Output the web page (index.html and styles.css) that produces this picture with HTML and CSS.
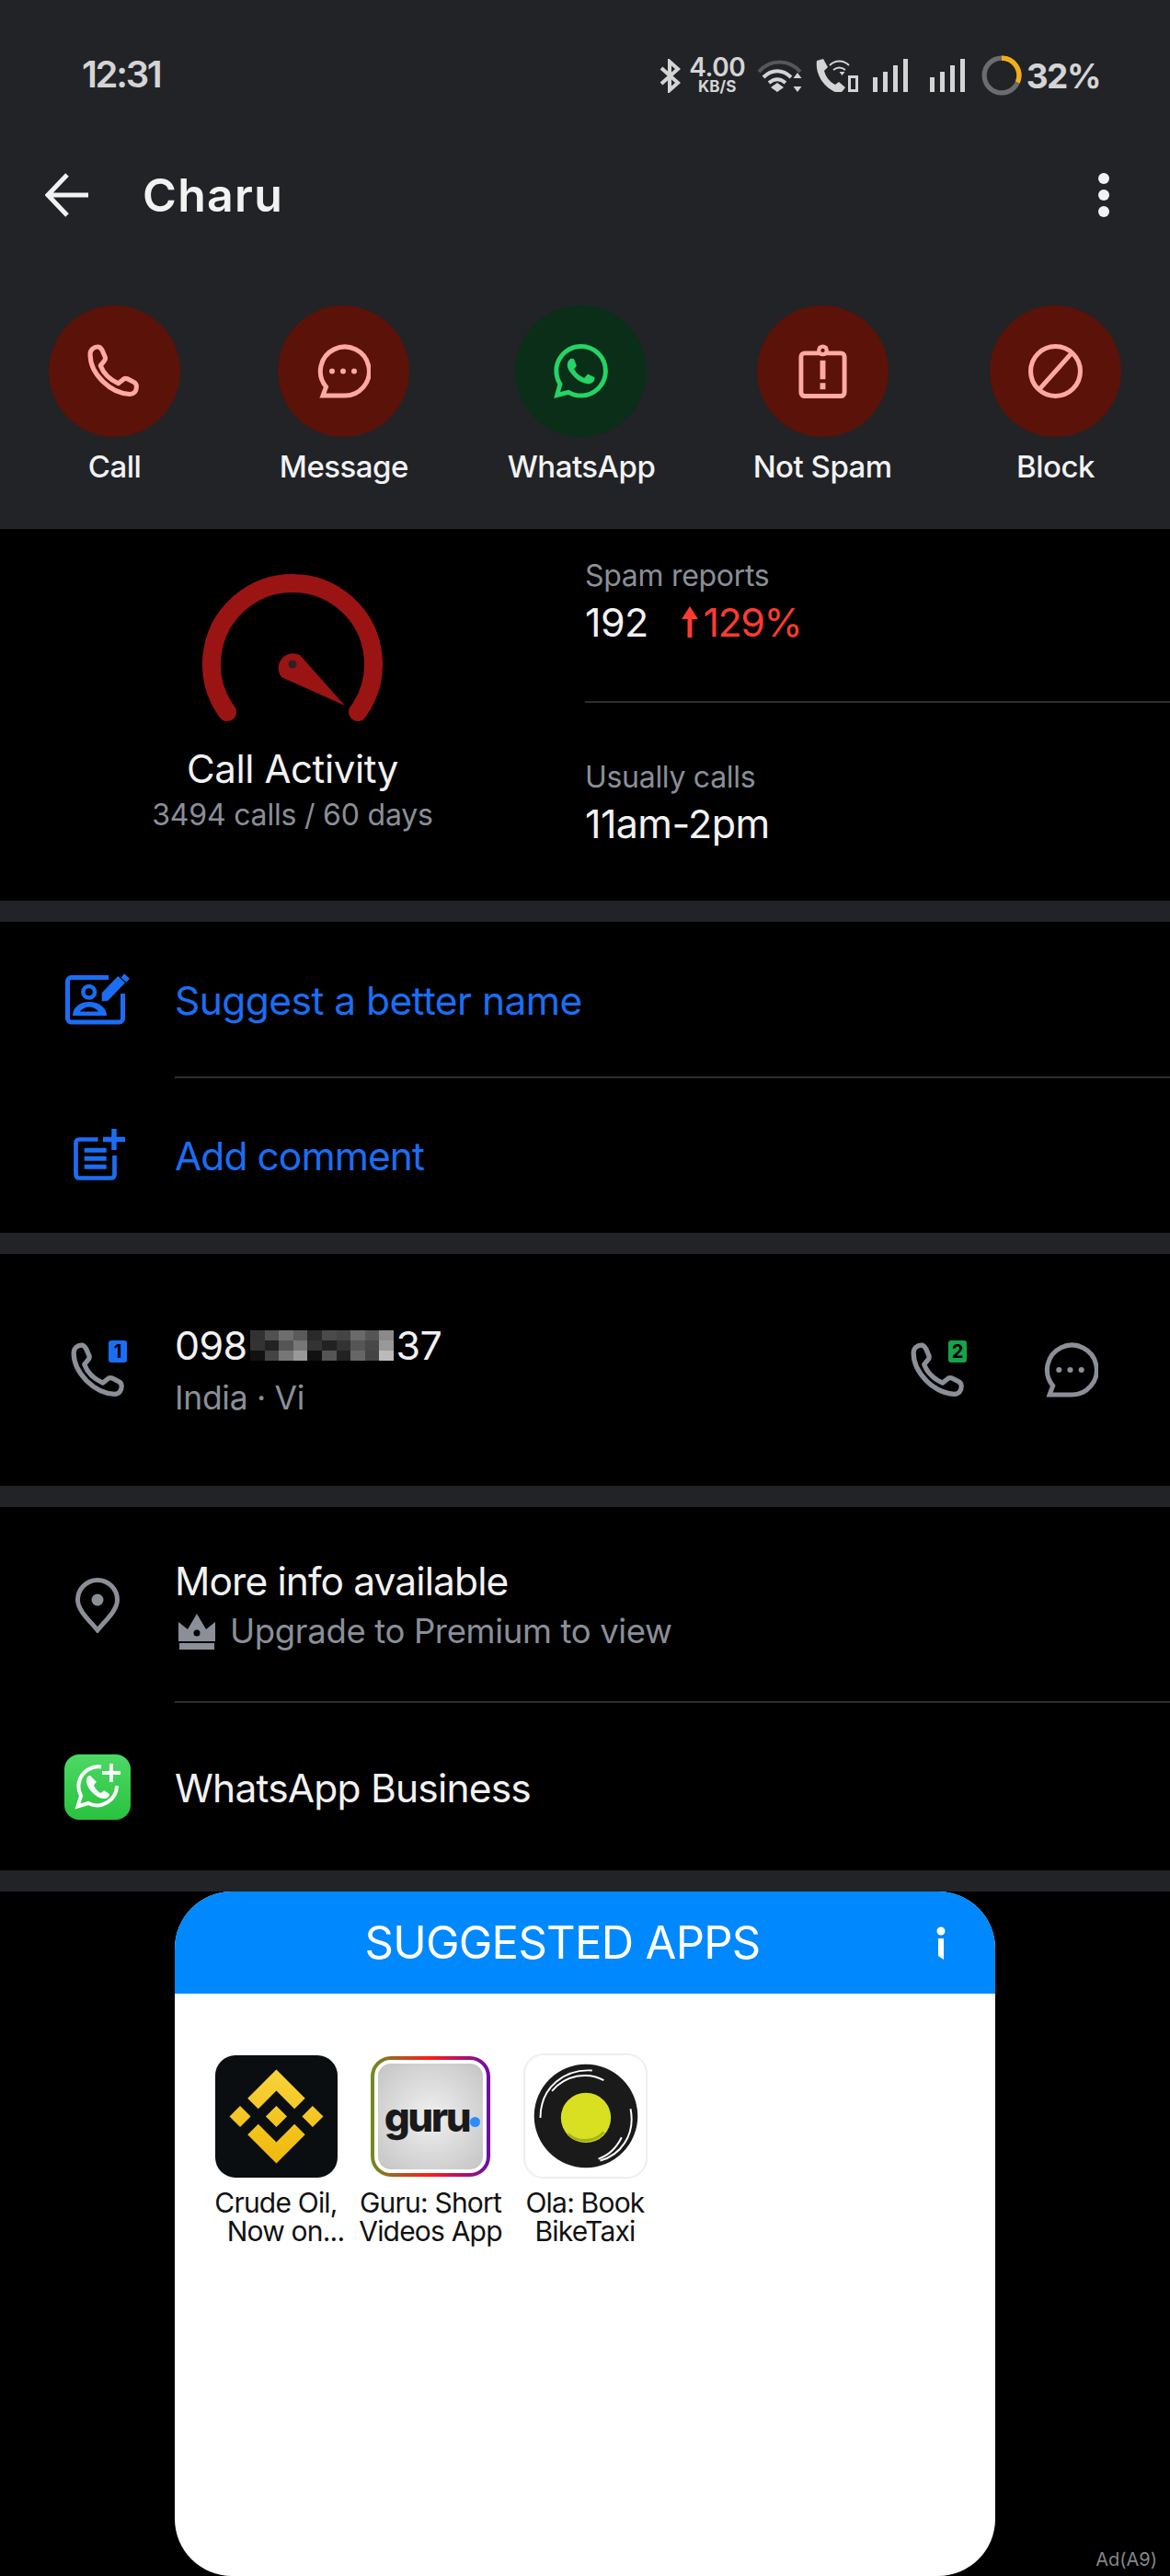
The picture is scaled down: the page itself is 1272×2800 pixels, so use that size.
FILE: index.html
```html
<!DOCTYPE html>
<html lang="en">
<head>
<meta charset="utf-8">
<title>Charu</title>
<link rel="stylesheet" href="styles.css">
</head>
<body>
<svg class="defs" width="0" height="0" aria-hidden="true">
  <defs>
    <symbol id="phone" viewBox="0 0 58 58"><path fill="none" stroke="currentColor" stroke-width="5" stroke-linejoin="round" d="M3 11C3 6 7 3 11 3c2 0 4 2 5 4l3 7c.5 2 0 3-1 4l-4 5c3 8 10 15 19 19l5-4c1-1 3-1.5 4.5-1l7 3.5c2 1 3 3 3 5 0 5-3 8-7 8C25 53 3 32 3 11z"/></symbol>
    <symbol id="chat" viewBox="0 0 59 58"><path fill="none" stroke="currentColor" stroke-width="5" d="M7 55.5 10.5 46A26.5 26.5 0 1 1 29.5 55.5Z"/><circle cx="17" cy="29" r="3" fill="currentColor"/><circle cx="29" cy="29" r="3" fill="currentColor"/><circle cx="41" cy="29" r="3" fill="currentColor"/></symbol>
  </defs>
</svg>

<header class="head">
  <div class="status">
    <span class="time">12:31</span>
    <div class="status-icons">
      <svg class="st-bt" viewBox="0 0 23 37"><path fill="none" stroke="#d4d4d4" stroke-width="4" d="M2 10 20 26 11 34V3l9 8L2 27"/></svg>
      <div class="speed"><span class="speed-n">4.00</span><span class="speed-u">KB/S</span></div>
      <svg class="st-wifi" viewBox="0 0 49 36"><path fill="none" stroke="#55575a" stroke-width="4" d="M2 14C14 0 35 0 47 14"/><path fill="none" stroke="#d4d4d4" stroke-width="4" d="M7 20c9-9 21-9 30 0M13 26c6-5 12-5 18 0"/><path fill="#d4d4d4" d="M22 26l7 5-7 5-7-5zM44 15l4.500 6h-9zM44 36l-4.500-6h9z"/></svg>
      <svg class="st-call" viewBox="0 0 47 36"><path fill="#d4d4d4" d="M2 2l7-2 5 9-4 4c2 7 6 12 12 15l4-3 7 6-3 4c-2 2-5 2-8 1C10 31 0 17 2 2z"/><path fill="none" stroke="#d4d4d4" stroke-width="2" d="M16 7c6-6 15-6 21 0M20 12c4-3 9-3 13 0"/><path fill="#d4d4d4" d="M26.500 14h6l-3 4zM36 18h11v18H36z"/><path fill="#212327" d="M39 21h5v12h-5z"/></svg>
      <svg class="st-sig" viewBox="0 0 38 36"><path fill="#d4d4d4" d="M0 20h5v16H0zM11 14h5v22h-5zM22 7h5v29h-5zM33 0h5v36h-5z"/></svg>
      <svg class="st-sig" viewBox="0 0 38 36"><path fill="#d4d4d4" d="M0 20h5v16H0zM11 14h5v22h-5zM22 7h5v29h-5zM33 0h5v36h-5z"/></svg>
      <svg class="st-batt" viewBox="0 0 42 42"><circle cx="21" cy="21" r="18" fill="none" stroke="#6b6c6e" stroke-width="5"/><path fill="none" stroke="#f5ae14" stroke-width="5" d="M21 3A18 18 0 0 1 37.500 28.200"/></svg>
      <span class="pct">32%</span>
    </div>
  </div>

  <div class="toolbar">
    <svg class="back" viewBox="0 0 48 48"><path fill="none" stroke="#f2f2f2" stroke-width="5" d="M47 24H4M24 2 3 24l21 22"/></svg>
    <h1 class="title">Charu</h1>
    <svg class="more" viewBox="0 0 12 48"><circle cx="6" cy="6" r="6" fill="#f2f2f2"/><circle cx="6" cy="24" r="6" fill="#f2f2f2"/><circle cx="6" cy="42" r="6" fill="#f2f2f2"/></svg>
  </div>

  <div class="actions">
    <div class="action">
      <div class="circle red"><svg class="a-ic"><use href="#phone"/></svg></div>
      <span class="a-label">Call</span>
    </div>
    <div class="action">
      <div class="circle red"><svg class="a-ic"><use href="#chat"/></svg></div>
      <span class="a-label">Message</span>
    </div>
    <div class="action">
      <div class="circle green"><svg class="a-ic" viewBox="0 0 24 24"><path fill="#25d366" d="M17.472 14.382c-.297-.149-1.758-.867-2.03-.967-.273-.099-.471-.148-.67.15-.197.297-.767.966-.94 1.164-.173.199-.347.223-.644.075-.297-.15-1.255-.463-2.39-1.475-.883-.788-1.48-1.761-1.653-2.059-.173-.297-.018-.458.13-.606.134-.133.298-.347.446-.52.149-.174.198-.298.298-.497.099-.198.05-.371-.025-.52-.075-.149-.669-1.612-.916-2.207-.242-.579-.487-.5-.669-.51-.173-.008-.371-.01-.57-.01-.198 0-.52.074-.792.372-.272.297-1.04 1.016-1.04 2.479 0 1.462 1.065 2.875 1.213 3.074.149.198 2.096 3.2 5.077 4.487.709.306 1.262.489 1.694.625.712.227 1.36.195 1.871.118.571-.085 1.758-.719 2.006-1.413.248-.694.248-1.289.173-1.413-.074-.124-.272-.198-.57-.347m-5.421 7.403h-.004a9.87 9.87 0 01-5.031-1.378l-.361-.214-3.741.982.998-3.648-.235-.374a9.86 9.86 0 01-1.51-5.26c.001-5.45 4.436-9.884 9.888-9.884 2.64 0 5.122 1.03 6.988 2.898a9.825 9.825 0 012.893 6.994c-.003 5.45-4.437 9.884-9.885 9.884m8.413-18.297A11.815 11.815 0 0012.05 0C5.495 0 .16 5.335.157 11.892c0 2.096.547 4.142 1.588 5.945L.057 24l6.305-1.654a11.882 11.882 0 005.683 1.448h.005c6.554 0 11.89-5.335 11.893-11.893a11.821 11.821 0 00-3.48-8.413z"/></svg></div>
      <span class="a-label">WhatsApp</span>
    </div>
    <div class="action">
      <div class="circle red"><svg class="a-ic" viewBox="0 0 53 60"><rect x="2.500" y="10" width="48" height="47.500" rx="4" fill="none" stroke="currentColor" stroke-width="5"/><circle cx="26.500" cy="7" r="6.500" fill="currentColor"/><circle cx="26.500" cy="7" r="2.200" fill="#5a1209"/><path fill="currentColor" d="M23.500 18h6v21h-6zM23.500 43h6v7h-6z"/></svg></div>
      <span class="a-label">Not Spam</span>
    </div>
    <div class="action">
      <div class="circle red"><svg class="a-ic" viewBox="0 0 58 58"><circle cx="29" cy="29" r="26.500" fill="none" stroke="currentColor" stroke-width="5"/><path fill="none" stroke="currentColor" stroke-width="5" d="M46 10 12 48"/></svg></div>
      <span class="a-label">Block</span>
    </div>
  </div>
</header>

<section class="stats">
  <div class="activity">
    <svg class="gauge" viewBox="0 0 200 165"><path fill="none" stroke="#9b1414" stroke-width="20" stroke-linecap="round" d="M29 150A88 88 0 1 1 171 150"/><path fill="#9b1414" d="M157 143 88 112a16 16 0 0 1 20-24z"/><circle cx="100" cy="98" r="4.500" fill="#2a2224"/></svg>
    <div class="act-title">Call Activity</div>
    <div class="act-sub">3494 calls / 60 days</div>
  </div>
  <div class="facts">
    <div class="fact fact-a">
      <div class="f-label">Spam reports</div>
      <div class="f-value"><span>192</span><span class="f-trend"><svg class="f-arrow" viewBox="0 0 18 34"><path fill="#ff3b30" d="M9 0l9 14h-6.500v20h-5V14H0z"/></svg>129%</span></div>
    </div>
    <div class="fact fact-b">
      <div class="f-label">Usually calls</div>
      <div class="f-value">11am-2pm</div>
    </div>
  </div>
</section>

<section class="block">
  <div class="row row-suggest">
    <svg class="ic" viewBox="0 0 72 60"><path fill="none" stroke="#1b6ef3" stroke-width="5" d="M48 5.500H7.500a4 4 0 0 0-4 4V50a4 4 0 0 0 4 4h52a4 4 0 0 0 4-4V23"/><circle cx="26.700" cy="21.300" r="6.300" fill="none" stroke="#1b6ef3" stroke-width="4.500"/><path fill="#1b6ef3" fill-rule="evenodd" d="M9 47c0-9 8-15 18-15s19 6 19 15zM17 42.500h20c-2-3-6-5-10-5s-8 2-10 5z"/><path fill="#1b6ef3" d="M40.700 31.300v-9L58.300 4 66 11.300 47.300 30.700zM65 1.300l6 5.400-3.700 4-5.600-5z"/></svg>
    <span class="link">Suggest a better name</span>
  </div>
  <div class="row row-add">
    <svg class="ic" viewBox="0 0 72 60"><path fill="none" stroke="#1b6ef3" stroke-width="4.700" d="M36.500 12.500H16A3.500 3.500 0 0 0 12.500 16v35a3.500 3.500 0 0 0 3.500 3.500h35a3.500 3.500 0 0 0 3.500-3.500V30"/><path fill="none" stroke="#1b6ef3" stroke-width="5.500" d="M42 12.500h24M54 1v23"/><path fill="none" stroke="#1b6ef3" stroke-width="5" d="M21.700 24.300h24M21.700 33.300h24M21.700 42.300h24"/></svg>
    <span class="link">Add comment</span>
  </div>
</section>

<section class="block number">
  <div class="icon-badge">
    <svg class="ic-phone"><use href="#phone"/></svg>
    <span class="badge b-blue">1</span>
  </div>
  <div class="num-text">
    <div class="num">098<svg class="blur" viewBox="0 0 10 3" preserveAspectRatio="none" shape-rendering="crispEdges"><path fill="#323232" d="M0 0h1v1H0z"/><path fill="#505050" d="M1 0h1v1H1z"/><path fill="#6e6e6e" d="M2 0h1v1H2z"/><path fill="#5a5a5a" d="M3 0h1v1H3z"/><path fill="#2a2a2a" d="M4 0h1v1H4z"/><path fill="#4a4a4a" d="M5 0h1v1H5z"/><path fill="#444" d="M6 0h1v1H6z"/><path fill="#6a6a6a" d="M7 0h1v1H7z"/><path fill="#555" d="M8 0h1v1H8z"/><path fill="#8a8a8a" d="M9 0h1v1H9z"/><path fill="#333" d="M0 1h1v1H0z"/><path fill="#222" d="M1 1h1v1H1z"/><path fill="#555" d="M2 1h1v1H2z"/><path fill="#777" d="M3 1h1v1H3z"/><path fill="#333" d="M4 1h1v1H4z"/><path fill="#222" d="M5 1h1v1H5z"/><path fill="#333" d="M6 1h1v1H6z"/><path fill="#555" d="M7 1h1v1H7z"/><path fill="#484848" d="M8 1h1v1H8z"/><path fill="#999" d="M9 1h1v1H9z"/><path fill="#111" d="M0 2h1v1H0z"/><path fill="#444" d="M1 2h1v1H1z"/><path fill="#777" d="M2 2h1v1H2z"/><path fill="#999" d="M3 2h1v1H3z"/><path fill="#111" d="M4 2h1v1H4z"/><path fill="#555" d="M5 2h1v1H5z"/><path fill="#222" d="M6 2h1v1H6z"/><path fill="#666" d="M7 2h1v1H7z"/><path fill="#444" d="M8 2h1v1H8z"/><path fill="#bbb" d="M9 2h1v1H9z"/></svg>37</div>
    <div class="num-sub">India · Vi</div>
  </div>
  <div class="num-actions">
    <div class="icon-badge">
      <svg class="ic-phone"><use href="#phone"/></svg>
      <span class="badge b-green">2</span>
    </div>
    <svg class="ic-chat"><use href="#chat"/></svg>
  </div>
</section>

<section class="block">
  <div class="row row-info">
    <svg class="ic" viewBox="0 0 72 60"><path fill="none" stroke="#8a8f98" stroke-width="5" d="M36 57C26 45 14.500 35 14.500 24a21.500 21.500 0 0 1 43 0C57.500 35 46 45 36 57z"/><circle cx="36" cy="24" r="6.500" fill="#8a8f98"/></svg>
    <div>
      <div class="info-title">More info available</div>
      <div class="info-sub"><svg class="crown" viewBox="0 0 40 39"><path fill="#8a8f98" d="M0 9l10 8L20 0l10 17 10-8v21H0zM1 32h38v7H1z"/><circle cx="20" cy="21" r="3.500" fill="#000"/></svg>Upgrade to Premium to view</div>
    </div>
  </div>
  <div class="row row-wa">
    <div class="ic wa-tile"><svg class="wa-glyph" viewBox="0 0 50 50"><path fill="none" stroke="#fff" stroke-width="4" d="M29 3.500A21.500 21.500 0 0 0 7 35L3.500 46.500 15 43a21.500 21.500 0 0 0 31-19"/><path fill="#fff" d="M38 0h4v8h8v4h-8v8h-4v-8h-8V8h8z"/><path fill="#fff" d="M17 13c-2 0-4 2-4 6 0 8 11 19 19 19 4 0 6-2 6-5l-6-4-3 3c-3-1-7-5-8-9l3-3z"/></svg></div>
    <span class="wa-text">WhatsApp Business</span>
  </div>
</section>

<section class="ad-area">
  <div class="ad-card">
    <div class="ad-head">
      <span class="ad-title">SUGGESTED APPS</span>
      <svg class="ad-i" viewBox="0 0 10 36"><circle cx="5" cy="5" r="4.500" fill="#fff"/><path fill="#fff" d="M2 13h6v23L2 32z"/></svg>
    </div>
    <div class="apps">
      <div class="app">
        <div class="app-ic app-binance"><svg class="bn" viewBox="-3.650 -3.650 31.300 31.300"><defs><linearGradient id="bg" x1="0" y1="0" x2="0" y2="1"><stop offset="0" stop-color="#f8d33a"/><stop offset="1" stop-color="#f0b90b"/></linearGradient></defs><path fill="url(#bg)" d="M16.624 13.9202l2.7175 2.7154-7.353 7.353-7.353-7.352 2.7175-2.7164 4.6355 4.6595 4.6356-4.6595zm4.6366-4.6366L24 12l-2.7154 2.7164L18.5682 12l2.6924-2.7164zm-9.272.001l2.7163 2.6914-2.7164 2.7174v-.001L9.2721 12l2.7164-2.7154zm-9.2722-.001L5.4088 12l-2.6914 2.6924L0 12l2.7164-2.7164zM11.9885.0115l7.353 7.329-2.7174 2.7154-4.6356-4.6356-4.6355 4.6595-2.7174-2.7154 7.353-7.353z"/></svg></div>
        <div class="app-name">Crude Oil,<br><span class="indent">Now on...</span></div>
      </div>
      <div class="app">
        <div class="app-ic app-guru"><div class="guru-in"><span class="guru-t">guru</span><span class="guru-dot"></span></div></div>
        <div class="app-name">Guru: Short<br>Videos App</div>
      </div>
      <div class="app">
        <div class="app-ic app-ola"><svg class="ola" viewBox="0 0 135 136"><circle cx="68" cy="68" r="58" fill="#1a1a1a"/><path fill="none" stroke="#fff" stroke-width="2" d="M17 70C17 35 45 15 75 17M30 40C45 22 70 18 88 28M118 60c6 30-12 52-34 58M108 92c-6 12-14 20-26 24"/><circle cx="68" cy="70" r="28" fill="#d8e021"/><path fill="none" stroke="#a7b01a" stroke-width="3" d="M48 88c10 10 30 10 40-2"/></svg></div>
        <div class="app-name">Ola: Book<br>BikeTaxi</div>
      </div>
    </div>
  </div>
  <span class="ad-tag">Ad(A9)</span>
</section>
</body>
</html>
```
FILE: styles.css
```css
* { box-sizing: border-box; }
html, body { margin: 0; padding: 0; }
body {
  width: 1272px;
  height: 2800px;
  overflow: hidden;
  background: #000;
  color: #f2f2f2;
  font-family: Inter, "Liberation Sans", sans-serif;
}
.defs { position: absolute; }

/* header */
.head { height: 575px; background: #212327; padding-top: 60px; }
.status {
  height: 44px;
  display: flex;
  align-items: center;
  justify-content: space-between;
  padding: 0 76px 0 89px;
}
.time { font-size: 40px; font-weight: 600; color: #d4d4d4; letter-spacing: -2.300px; margin-top: -3px; }
.status-icons { display: flex; align-items: center; }
.st-bt { width: 23px; height: 37px; }
.speed { display: flex; flex-direction: column; align-items: center; margin-left: 10px; width: 60px; color: #d4d4d4; font-weight: 600; }
.speed-n { font-size: 28px; line-height: 21px; letter-spacing: -.5px; }
.speed-u { font-size: 17px; line-height: 16px; margin-top: 2px; font-weight: 700; }
.st-wifi { width: 49px; height: 36px; margin-left: 13px; }
.st-call { width: 47px; height: 36px; margin-left: 14px; }
.st-sig { width: 38px; height: 36px; margin-left: 16px; }
.st-sig + .st-sig { margin-left: 24px; }
.st-batt { width: 44px; height: 44px; margin-left: 18px; }
.pct { font-size: 37px; font-weight: 700; color: #d4d4d4; margin-left: 5px; letter-spacing: -1.5px; }

.toolbar {
  margin-top: 84px;
  height: 48px;
  display: flex;
  align-items: center;
  padding: 0 66px 0 49px;
}
.back { width: 48px; height: 48px; }
.title { margin: 0 0 0 58px; font-size: 50px; font-weight: 600; letter-spacing: 1.300px; color: #f2f2f2; flex: 1; }
.more { width: 12px; height: 48px; }

.actions {
  margin-top: 96px;
  display: flex;
  justify-content: space-between;
  padding: 0 53px;
}
.action { display: flex; flex-direction: column; align-items: center; }
.circle {
  width: 143px;
  height: 143px;
  border-radius: 50%;
  display: flex;
  align-items: center;
  justify-content: center;
  color: #ffa9a2;
}
.red { background: #5a1209; }
.green { background: #0a2e18; }
.a-ic { width: 59px; height: 59px; }
.a-label { margin-top: 14px; font-size: 33px; line-height: 36px; font-weight: 500; color: #f2f2f2; white-space: nowrap; letter-spacing: -.5px; }

/* stats */
.stats {
  height: 427px;
  display: grid;
  grid-template-columns: 636px 636px;
  border-bottom: 23px solid #212327;
}
.activity { display: flex; flex-direction: column; align-items: center; padding-top: 49px; }
.gauge { width: 200px; height: 165px; }
.act-title { margin-top: 24px; font-size: 42px; line-height: 46px; letter-spacing: -.4px; color: #f2f2f2; }
.act-sub { margin-top: 7px; font-size: 32px; line-height: 40px; color: #8a8f98; letter-spacing: -.2px; }
.facts { display: flex; flex-direction: column; }
.fact-a { height: 189px; border-bottom: 2px solid #2d2d2d; padding-top: 29px; }
.fact-b { padding-top: 59px; }
.f-label { font-size: 32px; line-height: 44px; color: #8a8f98; letter-spacing: -.3px; }
.f-value { margin-top: 4px; font-size: 43px; line-height: 48px; color: #f2f2f2; display: flex; letter-spacing: -.6px; white-space: nowrap; }
.f-trend { margin-left: 36px; color: #ff3b30; display: flex; align-items: center; letter-spacing: -1.500px; }
.f-arrow { width: 18px; height: 34px; margin-right: 6px; }

/* lists */
.block { border-bottom: 23px solid #212327; }
.row { display: flex; align-items: center; padding-left: 70px; }
.ic { width: 72px; height: 60px; margin-right: 48px; flex: none; }
.row-suggest { height: 170px; position: relative; }
.row-add { height: 168px; }
.row-suggest::after, .row-info::after {
  content: "";
  position: absolute;
  left: 190px;
  right: 0;
  bottom: 0;
  height: 2px;
  background: #2d2d2d;
}
.link { font-size: 42.500px; letter-spacing: -.55px; color: #1b6ef3; }
.row-add .link { letter-spacing: -.95px; }

.number {
  height: 275px;
  padding: 0 78px 0 77px;
  display: flex;
  align-items: center;
}
.icon-badge { position: relative; width: 61px; height: 61px; color: #8a8f98; flex: none; }
.ic-phone { width: 61px; height: 61px; }
.badge {
  position: absolute;
  right: 0;
  top: -2px;
  width: 20px;
  height: 24px;
  border-radius: 3px;
  font-size: 20px;
  line-height: 24px;
  font-weight: 700;
  text-align: center;
  color: #000;
}
.b-blue { background: #1b6ef3; }
.b-green { background: #16a34a; }
.num-text { margin-left: 52px; flex: 1; padding-top: 4px; }
.num { font-size: 43px; line-height: 58px; display: flex; align-items: center; letter-spacing: -.6px; }
.blur { width: 156px; height: 33px; margin: 0 3px; }
.num-sub { font-size: 35.500px; line-height: 58px; color: #8a8f98; letter-spacing: -.3px; }
.num-actions { display: flex; align-items: center; gap: 83px; }
.ic-chat { width: 60px; height: 60px; color: #8a8f98; }

.row-info { height: 213px; position: relative; }
.info-title { font-size: 42.500px; line-height: 55px; letter-spacing: -.9px; padding-top: 2px; }
.info-sub { font-size: 36.500px; line-height: 55px; color: #8a8f98; display: flex; align-items: center; letter-spacing: -.35px; white-space: nowrap; }
.crown { width: 40px; height: 39px; margin: 0 16px 0 4px; flex: none; }
.row-wa { height: 182px; }
.wa-tile {
  width: 72px;
  height: 71px;
  border-radius: 16px;
  background: linear-gradient(#4cd964, #29c23f);
  display: flex;
  align-items: center;
  justify-content: center;
}
.wa-glyph { width: 50px; height: 50px; }
.wa-text { font-size: 42.500px; letter-spacing: -.8px; padding-top: 2px; }

/* ad */
.ad-area { height: 744px; display: flex; padding: 0 14px 0 190px; }
.ad-card { width: 892px; height: 744px; background: #fff; border-radius: 62px; overflow: hidden; flex: none; }
.ad-head {
  height: 111px;
  background: #0088ff;
  display: flex;
  align-items: center;
  justify-content: center;
  position: relative;
  padding-right: 49px;
}
.ad-title { font-size: 49px; color: #fff; letter-spacing: -.7px; }
.ad-i { position: absolute; right: 54px; top: 38px; width: 10px; height: 36px; }
.apps { display: flex; padding: 67px 0 0 26px; }
.app { width: 168px; display: flex; flex-direction: column; align-items: center; }
.app-ic { width: 133px; height: 133px; border-radius: 22px; display: flex; align-items: center; justify-content: center; }
.app-binance { background: #0b0e11; }
.bn { width: 133px; height: 133px; }
.app-guru {
  width: 130px;
  height: 131px;
  margin: 1px 0;
  background: linear-gradient(90deg, #6b8e23 0%, #ff1a1a 50%, #6a0dad 100%);
  padding: 4px;
}
.guru-in {
  width: 100%;
  height: 100%;
  border-radius: 18px;
  border: 4px solid #fff;
  background: radial-gradient(circle, #f0f0f0 0%, #c4c4c4 100%);
  display: flex;
  align-items: center;
  justify-content: center;
}
.guru-t { font-size: 44px; font-weight: 800; color: #1a1a1a; letter-spacing: -2.5px; line-height: 44px; margin-left: 4px; }
.guru-dot { width: 11px; height: 11px; border-radius: 50%; background: #2a8cff; margin: 12px 0 0 1px; }
.app-ola { width: 135px; height: 136px; margin: -2px 0 -1px; border: 2px solid #eeeeee; background: #fff; }
.ola { width: 131px; height: 132px; }
.app-name { margin-top: 12px; font-size: 30px; line-height: 31px; color: #111; text-align: center; letter-spacing: -.8px; white-space: nowrap; }
.indent { padding-left: 21px; }
.ad-tag { margin-left: auto; align-self: flex-end; font-size: 20px; line-height: 36px; color: #85868a; }
```
